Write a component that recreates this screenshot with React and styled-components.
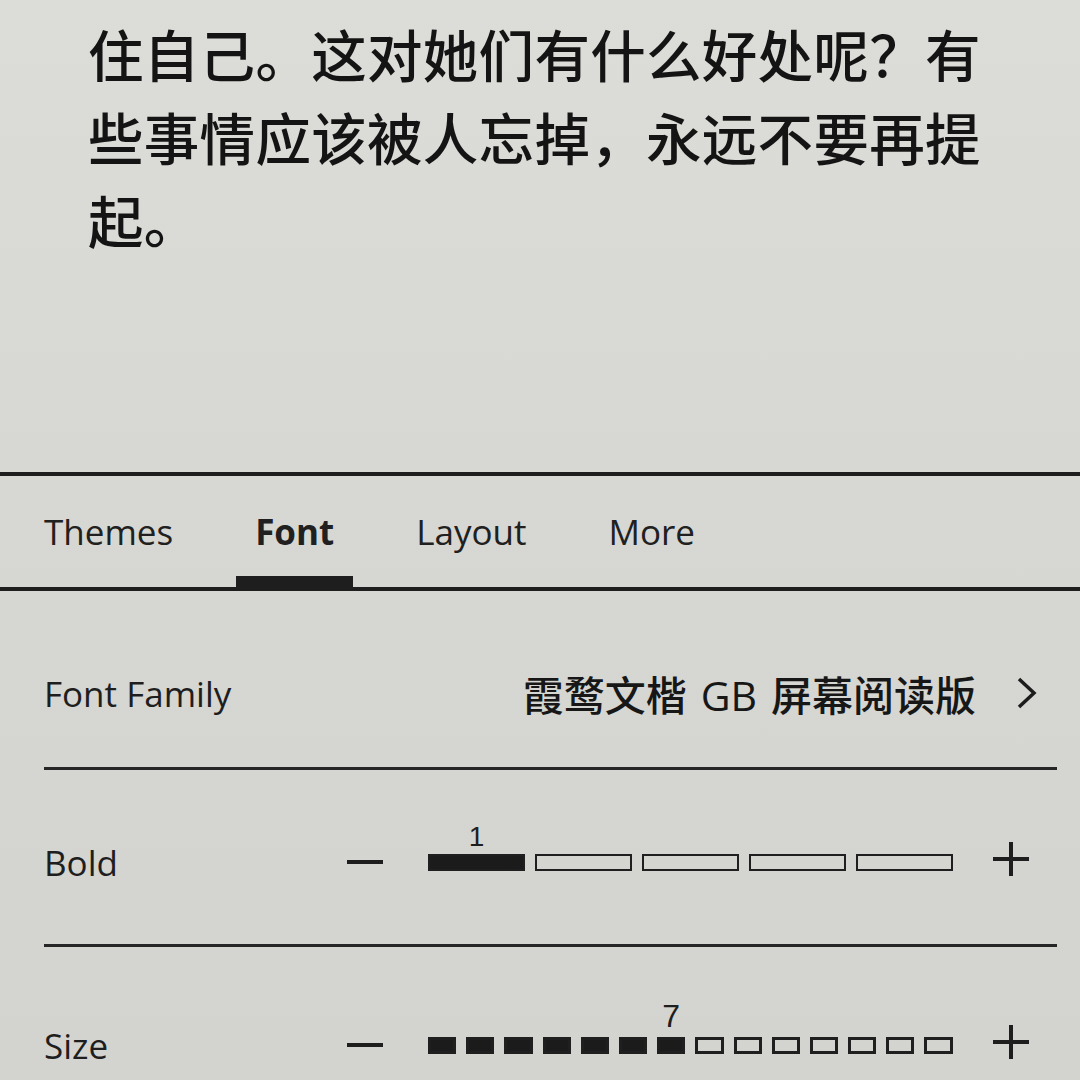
import React from "react";
import styled, { createGlobalStyle } from "styled-components";

const GlobalStyle = createGlobalStyle`
  html, body {
    margin: 0;
    padding: 0;
  }
  body {
    width: 1080px;
    height: 1080px;
    overflow: hidden;
    background: #d6d6d2;
    color: #1c1c1c;
    font-family: "Open Sans", "Noto Sans CJK SC", sans-serif;
  }
`

const Screen = styled.div`
  width: 1080px;
  height: 1080px;
  display: flex;
  flex-direction: column;
  overflow: hidden;
  background: linear-gradient(180deg, #dcdcd8 0%, #d7d7d3 45%, #d3d3cf 100%);
`

const Reading = styled.section`
  height: 472px;
  box-sizing: border-box;
  padding: 12px 0 0 88px;
  flex: none;
`

const Paragraph = styled.p`
  margin: 0;
  width: 900px;
  font-family: "Noto Sans CJK SC", sans-serif;
  font-size: 55.5px;
  font-weight: 500;
  letter-spacing: 0.3px;
  line-height: 83px;
  color: #141414;
`

const TabBar = styled.nav`
  flex: none;
  height: 111px;
  display: flex;
  align-items: stretch;
  gap: 44px;
  padding-left: 25px;
  border-top: 4px solid #1e1e1e;
  border-bottom: 4px solid #1e1e1e;
`

const Tab = styled.div`
  position: relative;
  display: flex;
  align-items: center;
  padding: 0 19px;
  font-size: 35px;
  font-weight: ${(p) => (p.$active ? 700 : 400)};
  color: #202020;

  &::after {
    content: "";
    display: ${(p) => (p.$active ? "block" : "none")};
    position: absolute;
    left: 0;
    right: 0;
    bottom: 0;
    height: 11px;
    background: #1e1e1e;
  }
`

const Settings = styled.div`
  display: flex;
  flex-direction: column;
  margin: 0 23px 0 44px;
`

const Row = styled.div`
  display: flex;
  align-items: center;
  height: ${(p) => p.$height}px;
  padding-top: ${(p) => p.$pad}px;
  border-bottom: ${(p) => (p.$last ? "none" : "3px solid #262626")};
  flex: none;
`

const Label = styled.div`
  width: 303px;
  flex: none;
  font-size: 35px;
  color: #1e1e1e;
`

const Value = styled.div`
  margin-left: auto;
  display: flex;
  align-items: center;
  gap: 40px;
  padding-right: 19px;
  font-family: "Noto Sans CJK SC", sans-serif;
  font-size: 41px;
  font-weight: 500;
  color: #171717;
`

const Latin = styled.span`
  font-family: "Open Sans", sans-serif;
  font-weight: 500;
  margin: 0 14px;
`

const Minus = styled.div`
  width: 36px;
  height: 4px;
  background: #1e1e1e;
  margin-right: 45px;
  flex: none;
`

const Track = styled.div`
  display: flex;
  gap: 10px;
  width: 525px;
  flex: none;
`

const Segment = styled.div`
  position: relative;
  box-sizing: border-box;
  width: ${(p) => p.$w}px;
  height: 17px;
  flex: none;
  background: ${(p) => (p.$on ? "#1b1b1b" : "transparent")};
  border: ${(p) => p.$border}px solid #1f1f1f;
`

const Level = styled.span`
  position: absolute;
  left: 50%;
  bottom: 100%;
  transform: translateX(-50%);
  margin-bottom: ${(p) => p.$gap}px;
  font-family: "Liberation Sans", sans-serif;
  font-size: ${(p) => p.$size}px;
  line-height: 1;
  color: #1e1e1e;
`

const PlusWrap = styled.div`
  margin-left: 40px;
  width: 36px;
  height: 36px;
  flex: none;
  display: flex;
  transform: translateY(-3px);
`

function Plus() {
  return (
    <PlusWrap>
      <svg width="36" height="36" viewBox="0 0 36 36">
        <path d="M0 18H36M18 1V35" stroke="#1e1e1e" strokeWidth="4" fill="none" />
      </svg>
    </PlusWrap>
  );
}

function Chevron() {
  return (
    <svg width="22" height="34" viewBox="0 0 22 34">
      <polyline points="3,3 18,17 3,31" fill="none" stroke="#1c1c1c" strokeWidth="3.5" />
    </svg>
  );
}

function Stepper({ count, value, segWidth, border, labelSize, labelGap }) {
  return (
    <>
      <Minus />
      <Track>
        {Array.from({ length: count }).map((_, i) => (
          <Segment key={i} $w={segWidth} $on={i < value} $border={border}>
            {i === value - 1 && (
              <Level $size={labelSize} $gap={labelGap}>
                {value}
              </Level>
            )}
          </Segment>
        ))}
      </Track>
      <Plus />
    </>
  );
}

const tabs = ["Themes", "Font", "Layout", "More"];

export default function App() {
  return (
    <Screen>
      <GlobalStyle />
      <Reading>
        <Paragraph>
          住自己。这对她们有什么好处呢？有些事情应该被人忘掉，永远不要再提起。
        </Paragraph>
      </Reading>

      <TabBar>
        {tabs.map((t) => (
          <Tab key={t} $active={t === "Font"}>
            {t}
          </Tab>
        ))}
      </TabBar>

      <Settings>
        <Row $height={148} $pad={28}>
          <Label>Font Family</Label>
          <Value>
            <span>
              霞鹜文楷<Latin>GB</Latin>屏幕阅读版
            </span>
            <Chevron />
          </Value>
        </Row>
        <Row $height={164} $pad={10}>
          <Label>Bold</Label>
          <Stepper count={5} value={1} segWidth={97} border={2} labelSize={28} labelGap={5} />
        </Row>
        <Row $height={196} $pad={0} $last>
          <Label>Size</Label>
          <Stepper count={14} value={7} segWidth={28.2} border={3} labelSize={32} labelGap={8} />
        </Row>
      </Settings>
    </Screen>
  );
}
